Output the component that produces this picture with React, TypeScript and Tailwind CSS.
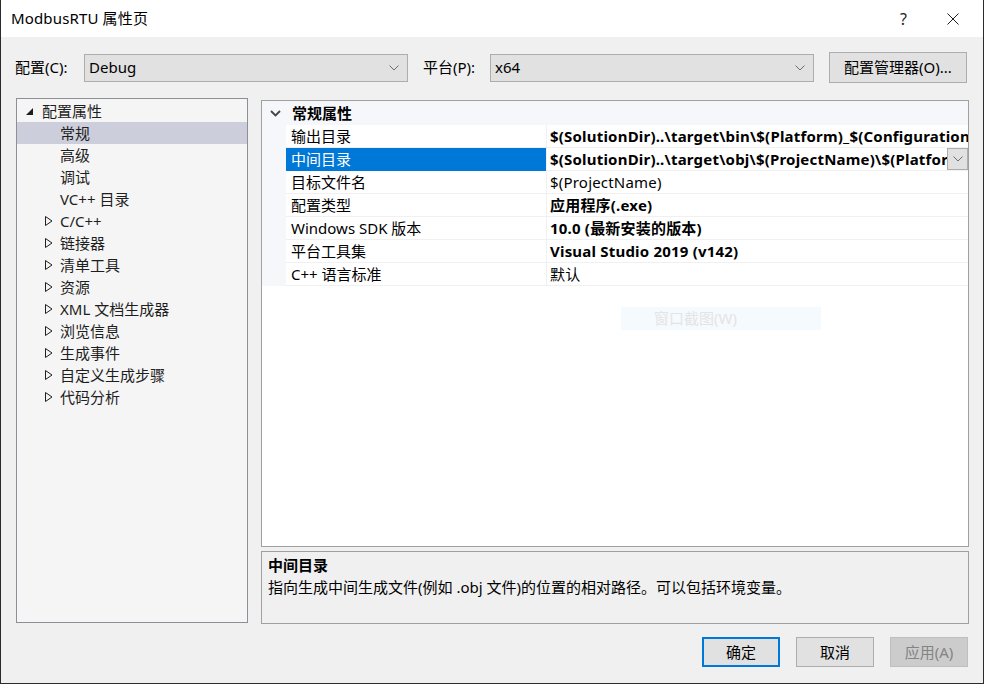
import React from "react";

const FONT = { fontFamily: '"Noto Sans", "Noto Sans CJK SC", sans-serif' };

interface TreeItem {
  label: string;
  kind: "root" | "child" | "collapsed";
  selected?: boolean;
}

const treeItems: TreeItem[] = [
  { label: "配置属性", kind: "root" },
  { label: "常规", kind: "child", selected: true },
  { label: "高级", kind: "child" },
  { label: "调试", kind: "child" },
  { label: "VC++ 目录", kind: "child" },
  { label: "C/C++", kind: "collapsed" },
  { label: "链接器", kind: "collapsed" },
  { label: "清单工具", kind: "collapsed" },
  { label: "资源", kind: "collapsed" },
  { label: "XML 文档生成器", kind: "collapsed" },
  { label: "浏览信息", kind: "collapsed" },
  { label: "生成事件", kind: "collapsed" },
  { label: "自定义生成步骤", kind: "collapsed" },
  { label: "代码分析", kind: "collapsed" },
];

interface PropRow {
  name: string;
  value: string;
  bold: boolean;
  selected?: boolean;
}

const props: PropRow[] = [
  { name: "输出目录", value: "$(SolutionDir)..\\target\\bin\\$(Platform)_$(Configuration)\\", bold: true },
  { name: "中间目录", value: "$(SolutionDir)..\\target\\obj\\$(ProjectName)\\$(Platform)_$(Configuration)\\", bold: true, selected: true },
  { name: "目标文件名", value: "$(ProjectName)", bold: false },
  { name: "配置类型", value: "应用程序(.exe)", bold: true },
  { name: "Windows SDK 版本", value: "10.0 (最新安装的版本)", bold: true },
  { name: "平台工具集", value: "Visual Studio 2019 (v142)", bold: true },
  { name: "C++ 语言标准", value: "默认", bold: false },
];

function Chevron({ className }: { className?: string }) {
  return (
    <svg width="10" height="6" viewBox="0 0 10 6" className={className}>
      <polyline points="0.5,0.5 5,5 9.5,0.5" fill="none" stroke="currentColor" strokeWidth="1" />
    </svg>
  );
}

function Select({ value }: { value: string }) {
  return (
    <div className="flex h-[28px] w-[324px] items-center justify-between border border-[#adadad] bg-[#e1e1e1] pl-[4px] pr-[8px]">
      <span className="text-[15px] text-black">{value}</span>
      <Chevron className="text-[#6d6d6d]" />
    </div>
  );
}

function TreeRow({ item }: { item: TreeItem }) {
  return (
    <div
      className={`flex h-[22px] items-center text-[15px] text-[#1e1e1e] ${item.selected ? "bg-[#cccedb]" : ""}`}
    >
      {item.kind === "root" && (
        <>
          <svg width="7" height="7" viewBox="0 0 7 7" className="ml-[9px] mr-[9px]">
            <polygon points="7,0 7,7 0,7" fill="#1e1e1e" />
          </svg>
          <span>{item.label}</span>
        </>
      )}
      {item.kind === "child" && <span className="ml-[43px]">{item.label}</span>}
      {item.kind === "collapsed" && (
        <>
          <svg width="8" height="10" viewBox="0 0 8 10" className="ml-[28px] mr-[7px]">
            <polygon points="0.5,0.5 7,5 0.5,9.5" fill="none" stroke="#1e1e1e" strokeWidth="1" />
          </svg>
          <span>{item.label}</span>
        </>
      )}
    </div>
  );
}

function Button({ label, variant }: { label: string; variant: "default" | "normal" | "disabled" }) {
  const styles = {
    default: "border-2 border-[#0078d7] bg-[#e1e1e1] text-black",
    normal: "border border-[#adadad] bg-[#e1e1e1] text-black",
    disabled: "border border-[#bfbfbf] bg-[#cccccc] text-[#838383]",
  }[variant];
  return (
    <div className={`flex h-[30px] w-[78px] items-center justify-center text-[15px] ${styles}`}>{label}</div>
  );
}

export default function App() {
  return (
    <div
      style={FONT}
      className="relative flex h-[684px] w-[984px] flex-col overflow-hidden border-x border-b border-[#2b2b2b] bg-[#f0f0f0]"
    >
      {/* title bar */}
      <div className="flex h-[37px] shrink-0 items-center bg-white">
        <span className="ml-[10px] text-[15px] tracking-[0.15px] text-black">ModbusRTU 属性页</span>
        <span className="ml-auto mr-[40px] text-[16px] text-[#1e1e1e]">?</span>
        <svg width="12" height="12" viewBox="0 0 12 12" className="mr-[24px]">
          <path d="M0.5,0.5 L11.5,11.5 M11.5,0.5 L0.5,11.5" stroke="#1e1e1e" strokeWidth="1" />
        </svg>
      </div>

      {/* config row */}
      <div className="mt-[15px] flex h-[31px] shrink-0 items-center pl-[14px] text-[15px] text-black">
        <span className="w-[69px]">配置(C):</span>
        <Select value="Debug" />
        <span className="ml-[15px] w-[67px]">平台(P):</span>
        <Select value="x64" />
        <div className="ml-[15px] flex h-[31px] w-[138px] items-center justify-center border border-[#adadad] bg-[#e1e1e1]">
          配置管理器(O)...
        </div>
      </div>

      {/* main area */}
      <div className="mt-[15px] flex shrink-0 pl-[15px]">
        <div className="h-[525px] w-[232px] border border-[#8e8e96] bg-[#f5f5f5] pt-[1px]">
          {treeItems.map((item) => (
            <TreeRow key={item.label} item={item} />
          ))}
        </div>

        <div className="ml-[13px] mt-[2px] flex w-[708px] flex-col gap-[4px]">
          {/* property grid */}
          <div className="flex h-[447px] flex-col overflow-hidden border border-[#a0a0a0] bg-white">
            <div className="flex h-[24px] shrink-0 items-center bg-[#f5f7fa]">
              <svg width="11" height="7" viewBox="0 0 11 7" className="ml-[8px] mr-[11px]">
                <polyline points="1,1 5.5,5.5 10,1" fill="none" stroke="#444444" strokeWidth="1.8" />
              </svg>
              <span className="text-[15px] font-bold text-black">常规属性</span>
            </div>
            {props.map((row) => (
              <div key={row.name} className="flex h-[23px] shrink-0">
                <div className="w-[24px] shrink-0 bg-[#f5f7fa]" />
                <div
                  className={`flex w-[260px] shrink-0 items-center border-b pl-[5px] text-[15px] ${
                    row.selected ? "border-[#0078d7] bg-[#0078d7] text-white" : "border-[#f0f0f0] text-black"
                  }`}
                >
                  {row.name}
                </div>
                <div className="relative flex min-w-0 flex-1 items-center overflow-hidden border-b border-l border-[#f0f0f0] pl-[3px]">
                  <span
                    className={`whitespace-nowrap text-[15px] tracking-[0.2px] text-black ${row.bold ? "font-bold" : ""}`}
                  >
                    {row.value}
                  </span>
                  {row.selected && (
                    <div className="absolute right-0 top-0 flex h-[22px] w-[21px] items-center justify-center border border-[#adadad] bg-[#e1e1e1]">
                      <Chevron className="text-[#6d6d6d]" />
                    </div>
                  )}
                </div>
              </div>
            ))}
            <div className="flex-1 bg-white" />
          </div>

          {/* description */}
          <div className="flex h-[73px] flex-col border border-[#a0a0a0] bg-[#f0f0f0] pl-[6px] pt-[2px] text-[15px] text-black">
            <span className="h-[22px] font-bold">中间目录</span>
            <span className="h-[22px]">指向生成中间生成文件(例如 .obj 文件)的位置的相对路径。可以包括环境变量。</span>
          </div>
        </div>
      </div>

      {/* buttons */}
      <div className="mt-[13px] flex shrink-0 justify-end gap-[16px] pr-[15px]">
        <Button label="确定" variant="default" />
        <Button label="取消" variant="normal" />
        <Button label="应用(A)" variant="disabled" />
      </div>

      {/* faint screenshot-tool hint overlay */}
      <div className="absolute left-[620px] top-[307px] flex h-[23px] w-[200px] items-center bg-[#f5faff] pl-[33px] text-[15px] text-[#e4e4e4]">
        窗口截图(W)
      </div>
    </div>
  );
}
